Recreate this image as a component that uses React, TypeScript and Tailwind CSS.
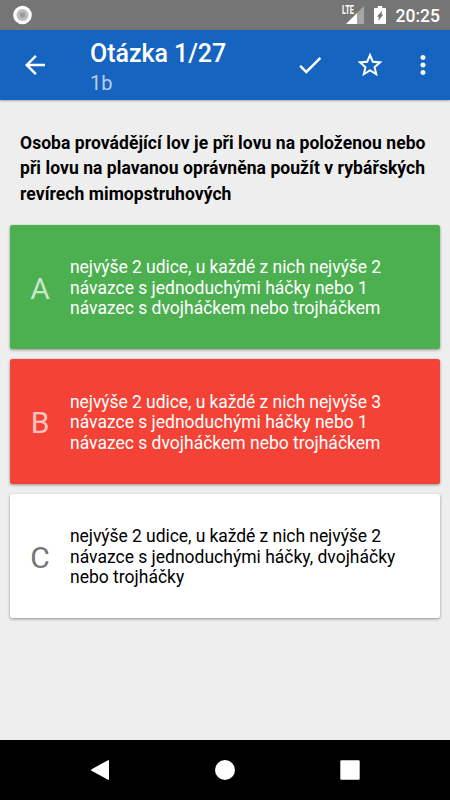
import { clsx } from "clsx"

interface Answer {
  letter: string
  lines: string[]
  state: "correct" | "wrong" | "neutral"
}

const question = [
  "Osoba provádějící lov je při lovu na položenou nebo",
  "při lovu na plavanou oprávněna použít v rybářských",
  "revírech mimopstruhových",
]

const answers: Answer[] = [
  {
    letter: "A",
    lines: [
      "nejvýše 2 udice, u každé z nich nejvýše 2",
      "návazce s jednoduchými háčky nebo 1",
      "návazec s dvojháčkem nebo trojháčkem",
    ],
    state: "correct",
  },
  {
    letter: "B",
    lines: [
      "nejvýše 2 udice, u každé z nich nejvýše 3",
      "návazce s jednoduchými háčky nebo 1",
      "návazec s dvojháčkem nebo trojháčkem",
    ],
    state: "wrong",
  },
  {
    letter: "C",
    lines: [
      "nejvýše 2 udice, u každé z nich nejvýše 2",
      "návazce s jednoduchými háčky, dvojháčky",
      "nebo trojháčky",
    ],
    state: "neutral",
  },
]

function Icon({ path, className }: { path: string; className?: string }) {
  return (
    <svg viewBox="0 0 24 24" fill="currentColor" className={clsx("size-[30px] shrink-0", className)}>
      <path d={path} />
    </svg>
  )
}

function StatusBar() {
  return (
    <div className="flex h-[30px] items-center bg-[#757575] pr-[10px] pl-[13px] text-white">
      <svg viewBox="0 0 20 20" className="size-5">
        <circle cx="9.5" cy="10" r="9.3" fill="#fff" />
        <circle cx="9.5" cy="10" r="6" fill="#bdbdbd" />
        <circle cx="9.5" cy="10" r="2.8" fill="#9b9b9b" />
      </svg>
      <div className="ml-auto flex h-full items-center">
        <span className="mr-[-9px] mb-[10px] w-[13px] origin-left scale-x-[0.62] text-[12px] leading-none font-bold">
          LTE
        </span>
        <svg viewBox="0 0 18 18" className="mr-[10px] size-[18px]">
          <path d="M11 7 18 0v18h-7z" fill="#fff" fillOpacity=".35" />
          <path d="M0 18 11 7v11z" fill="#fff" />
        </svg>
        <svg viewBox="0 0 12 18" className="mr-[9.5px] h-[18px] w-3">
          <path d="M1 2h2.8V0h4.4v2H11a1 1 0 0 1 1 1v14a1 1 0 0 1-1 1H1a1 1 0 0 1-1-1V3a1 1 0 0 1 1-1z" fill="#fff" />
          <path d="M8.2 4.5 7.4 8.6h2L4.2 15l.8-4.2H2.8z" fill="#757575" />
        </svg>
        <span className="pt-[3px] text-[17.5px] leading-none font-medium">20:25</span>
      </div>
    </div>
  )
}

function AppBar() {
  return (
    <header className="flex h-[70px] items-center bg-[#1565c0] pl-5 text-white shadow-[0_1px_2px_rgba(0,0,0,0.3)]">
      <Icon path="M20 11H7.83l5.59-5.59L12 4l-8 8 8 8 1.41-1.41L7.83 13H20v-2z" />
      <div className="ml-10 flex-1 pt-[7px]">
        <h1 className="text-[25px] leading-[30px] font-medium tracking-[-0.05px]">Otázka 1/27</h1>
        <p className="text-[20px] leading-[29px] text-white/70">1b</p>
      </div>
      <Icon path="M9 16.17L4.83 12l-1.42 1.41L9 19 21 7l-1.41-1.41z" />
      <Icon
        className="ml-[30px]"
        path="M22 9.24l-7.19-.62L12 2 9.19 8.63 2 9.24l5.46 4.73L5.82 21 12 17.27 18.18 21l-1.63-7.03L22 9.24zM12 15.4l-3.76 2.27 1-4.28-3.32-2.88 4.38-.38L12 6.1l1.71 4.04 4.38.38-3.32 2.88 1 4.28L12 15.4z"
      />
      <Icon
        className="mr-[12.5px] ml-[22.5px]"
        path="M12 8c1.1 0 2-.9 2-2s-.9-2-2-2-2 .9-2 2 .9 2 2 2zm0 2c-1.1 0-2 .9-2 2s.9 2 2 2 2-.9 2-2-.9-2-2-2zm0 6c-1.1 0-2 .9-2 2s.9 2 2 2 2-.9 2-2-.9-2-2-2z"
      />
    </header>
  )
}

function AnswerCard({ answer }: { answer: Answer }) {
  return (
    <button
      className={clsx(
        "flex h-[124.5px] w-full items-center rounded-[2.5px] pt-[2px] text-left shadow-[0_1px_3px_rgba(0,0,0,0.4)]",
        answer.state === "correct" && "bg-[#4caf50] text-white",
        answer.state === "wrong" && "bg-[#f44336] text-white",
        answer.state === "neutral" && "bg-white text-black",
      )}
    >
      <span
        className={clsx(
          "w-[60px] pt-[2px] text-center text-[30px] leading-none",
          answer.state === "neutral" ? "text-[#757575]" : "text-white/70",
        )}
      >
        {answer.letter}
      </span>
      <span className="text-[17.5px] leading-[20.5px] whitespace-nowrap">
        {answer.lines.map((line, i) => (
          <span key={line} className={clsx("block", i === 0 && "tracking-[-0.06px]")}>
            {line}
          </span>
        ))}
      </span>
    </button>
  )
}

function NavigationBar() {
  return (
    <nav className="flex h-[60px] items-center justify-between bg-black px-[90px] text-white">
      <svg viewBox="0 0 20 20" fill="currentColor" className="size-5">
        <path d="M18 0.2Q19 -.2 19 1v18q0 1.2-1 .8L1.6 10.8Q.4 10 1.6 9.2z" />
      </svg>
      <span className="size-5 rounded-full bg-white" />
      <svg viewBox="0 0 20 20" fill="currentColor" className="size-5">
        <rect x="0.3" y="0.3" width="19.4" height="19.4" rx="1.2" />
      </svg>
    </nav>
  )
}

export default function App() {
  return (
    <div className="flex h-[800px] w-[450px] flex-col overflow-hidden bg-[#eeeeee] font-[Roboto,sans-serif]">
      <StatusBar />
      <AppBar />
      <main className="flex-1 px-[10px] pt-[31px]">
        <h2 className="px-[10px] text-[17.5px] leading-[25.4px] font-bold tracking-[0.06px] whitespace-nowrap text-black">
          {question.map((line) => (
            <span key={line} className="block">
              {line}
            </span>
          ))}
        </h2>
        <div className="mt-[17.3px] flex flex-col gap-[10px]">
          {answers.map((answer) => (
            <AnswerCard key={answer.letter} answer={answer} />
          ))}
        </div>
      </main>
      <NavigationBar />
    </div>
  )
}
